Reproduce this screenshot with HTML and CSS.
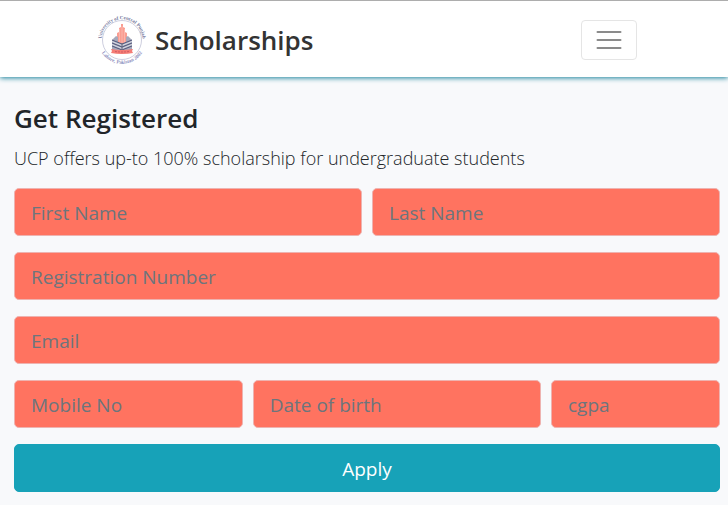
FILE: index.html
```html
<!DOCTYPE html>
<html lang="en">
<head>
<meta charset="utf-8">
<meta name="viewport" content="width=device-width, initial-scale=1">
<title>Scholarships</title>
<link rel="stylesheet" href="styles.css">
</head>
<body>
<header class="navbar">
  <div class="navbar-inner">
    <a class="brand" href="#">
      <svg class="brand-logo" viewBox="0 0 50 50" aria-hidden="true">
        <defs>
          <path id="arc-top" d="M6.200 33A20.500 20.500 0 1 1 43.800 33"/>
          <path id="arc-bottom" d="M1.800 31A24 24 0 0 0 48.200 31"/>
        </defs>
        <circle cx="25" cy="25" r="19.500" fill="#fff" stroke="#9b9dbd" stroke-width=".5"/>
        <text class="seal-text"><textPath href="#arc-top" startOffset="50%" text-anchor="middle">University of Central Punjab</textPath></text>
        <text class="seal-text seal-text-low"><textPath href="#arc-bottom" startOffset="50%" text-anchor="middle">Lahore, Pakistan 2002</textPath></text>
        <path fill="#fa9d91" d="M24 9h2v3l2 1v4l2 1v12H20V18l2-1v-4l2-1z"/>
        <path d="M22.500 14v14M25 11v17M27.500 14v14" stroke="#fdc7c0" stroke-width=".6"/>
        <path fill="#a6a9bb" d="M15 25l4-4 2 1v5l4 2 4-2v-5l2-1 4 4v10l-10 3-10-3z"/>
        <path fill="none" stroke="#54597c" stroke-width="1" d="M15 25l10 4 10-4M15 28l10 4 10-4M15 31l10 4 10-4"/>
        <path fill="none" stroke="#eceef4" stroke-width=".7" d="M15 26.500l10 4 10-4M15 29.500l10 4 10-4"/>
        <path d="M25 28v7" stroke="#62677f" stroke-width="1"/>
        <path fill="#f47c75" d="M14 34q5 1 11 1t11-1l-1 2 1 2q-5 1-11 1t-11-1l1-2z"/>
        <path d="M18 36.500q7 1 14 0" fill="none" stroke="#c95460" stroke-width=".8" stroke-dasharray="2 1"/>
      </svg>
      <span>Scholarships</span>
    </a>
    <button class="menu-toggle" type="button" aria-label="Menu">
      <svg viewBox="0 0 30 30" aria-hidden="true"><path d="M3.500 7h23M3.500 15h23M3.500 23h23" fill="none" stroke="#8b8b8b" stroke-width="2" stroke-linecap="round"/></svg>
    </button>
  </div>
</header>
<main class="page">
  <h1 class="title">Get Registered</h1>
  <p class="lead">UCP offers up-to 100% scholarship for undergraduate students</p>
  <form class="form">
    <input class="field half" type="text" placeholder="First Name" aria-label="First Name">
    <input class="field half" type="text" placeholder="Last Name" aria-label="Last Name">
    <input class="field" type="text" placeholder="Registration Number" aria-label="Registration Number">
    <input class="field" type="email" placeholder="Email" aria-label="Email">
    <input class="field third" type="tel" placeholder="Mobile No" aria-label="Mobile No">
    <input class="field wide" type="text" placeholder="Date of birth" aria-label="Date of birth">
    <input class="field quarter" type="text" placeholder="cgpa" aria-label="cgpa">
    <button class="apply" type="submit">Apply</button>
  </form>
</main>
</body>
</html>
```
FILE: styles.css
```css
* {
  box-sizing: border-box;
}

body {
  margin: 0;
  background: #f8f9fb;
  color: #212529;
  font-family: "Segoe UI", "Open Sans", "Noto Sans", sans-serif;
}

.navbar {
  padding: 12px 8px 10px 14px;
  background: #fff;
  border-top: 1px solid #adadad;
  box-shadow: 0 1px 5px #17809a;
}

.navbar-inner {
  display: flex;
  align-items: center;
  justify-content: space-between;
  max-width: 540px;
  margin: 0 auto;
}

.brand {
  display: flex;
  align-items: center;
  gap: 8px;
  color: #333;
  font-size: 26px;
  font-weight: 600;
  line-height: 54px;
  text-decoration: none;
}

.brand-logo {
  width: 50px;
  height: 50px;
}

.seal-text {
  fill: #74779b;
  font-family: "Liberation Serif", serif;
  font-size: 5px;
  font-weight: 700;
}

.seal-text-low {
  fill: #8b8cbc;
}

.menu-toggle {
  display: flex;
  padding: 4px 12px;
  background: transparent;
  border: 1px solid #e5e5e5;
  border-radius: 4px;
}

.menu-toggle svg {
  width: 30px;
  height: 30px;
}

.page {
  padding: 24px 8px 13px 14px;
}

.title {
  margin: 0 0 8px;
  font-size: 26px;
  font-weight: 600;
  line-height: 34px;
}

.lead {
  margin: 0 0 15px;
  font-size: 18px;
  font-weight: 300;
  line-height: 30px;
}

.form {
  display: grid;
  grid-template-columns: repeat(12, minmax(0, 1fr));
  gap: 16px 10px;
}

.field,
.apply {
  grid-column: span 12;
  min-width: 0;
  height: 48px;
  padding: 9px 16px 7px;
  border-radius: 5px;
  font-family: inherit;
  font-size: 19px;
  line-height: 30px;
}

.field {
  background: #ff7360;
  border: 1px solid #eeb3b0;
  color: #495057;
}

.field::placeholder {
  color: #6c757d;
  opacity: 1;
}

.half {
  grid-column: span 6;
}

.third {
  grid-column: span 4;
}

.wide {
  grid-column: span 5;
}

.quarter {
  grid-column: span 3;
}

.apply {
  background: #17a2b8;
  border: 1px solid #17a2b8;
  color: #fff;
}
```
